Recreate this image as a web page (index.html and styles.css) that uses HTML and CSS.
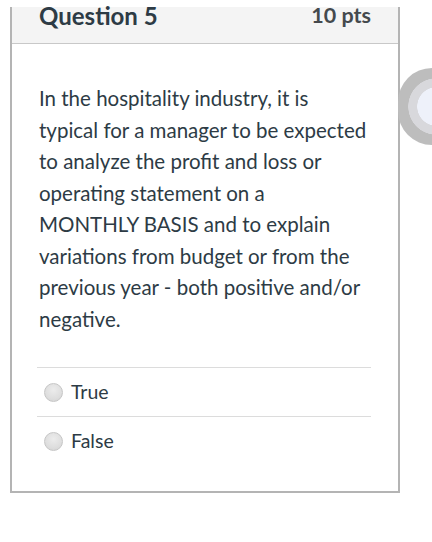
FILE: index.html
```html
<!DOCTYPE html>
<html>
<head>
<meta charset="utf-8">
<link rel="stylesheet" href="styles.css">
</head>
<body>
<div class="card">
  <div class="header">
    <h2 class="title">Question 5</h2>
    <span class="pts">10 pts</span>
  </div>
  <div class="content">
    <p class="question">In the hospitality industry, it is typical for a manager to be expected to analyze the profit and loss or operating statement on a MONTHLY BASIS and to explain variations from budget or from the previous year - both positive and/or negative.</p>
    <div class="answers">
      <label class="answer"><span class="radio"></span><span class="label">True</span></label>
      <label class="answer"><span class="radio"></span><span class="label">False</span></label>
    </div>
  </div>
</div>
<div class="bubble"></div>
</body>
</html>
```
FILE: styles.css
```css
html, body {
  margin: 0;
  padding: 0;
  background: #ffffff;
}
body {
  font-family: Lato, "Noto Sans", sans-serif;
  color: #2d3b45;
  width: 432px;
  height: 542px;
  overflow: hidden;
  position: relative;
}
.card {
  margin: 7px 0 0 10px;
  width: 390px;
  box-sizing: border-box;
  border: 2px solid #b4b4b4;
  border-top: none;
}
.header {
  height: 37px;
  box-sizing: border-box;
  background: #f4f4f4;
  border-bottom: 1px solid #c8c8c8;
  display: flex;
  justify-content: space-between;
  align-items: flex-start;
  padding: 0 27px 0 27px;
}
.title {
  margin: 0;
  font-size: 24px;
  font-weight: 700;
  line-height: 18px;
  color: #2d3b45;
}
.pts {
  font-size: 21.5px;
  font-weight: 700;
  line-height: 17px;
  color: #44494d;
}
.content {
  padding: 39px 26px 26px 25px;
}
.question {
  margin: 0 0 32px 2px;
  width: 330px;
  font-size: 20.5px;
  line-height: 31.5px;
  color: #2d3b45;
}
.answers {
  width: 334px;
}
.answer {
  display: flex;
  align-items: center;
  height: 49px;
  border-top: 1px solid #dcdcdc;
  box-sizing: border-box;
  padding-left: 7px;
  gap: 8px;
}
.radio {
  width: 19px;
  height: 19px;
  border-radius: 50%;
  box-sizing: border-box;
  border: 1px solid #c6c6c6;
  background: radial-gradient(circle at 50% 35%, #ececec 0%, #dedede 60%, #d2d2d2 100%);
}
.label {
  font-size: 19.5px;
  color: #2d3b45;
  line-height: 22px;
}
.bubble {
  position: absolute;
  left: 398px;
  top: 68px;
  width: 34px;
  height: 77px;
  border-radius: 38.5px 0 0 38.5px;
  background: radial-gradient(circle at 38.5px 38.5px, #eef1fa 0 19px, #d8d8dc 19.5px 28px, #bdbdbd 28.5px);
}
```
